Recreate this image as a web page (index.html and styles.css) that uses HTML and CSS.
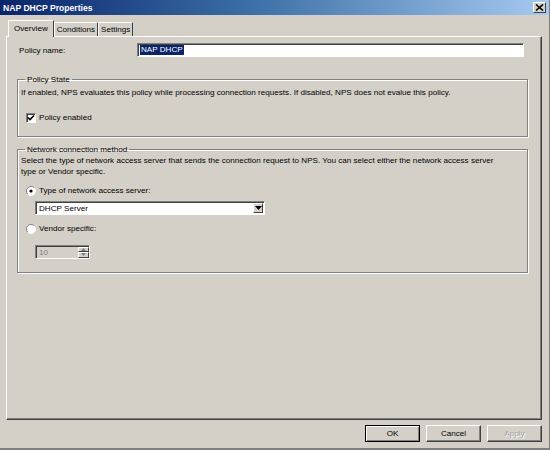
FILE: index.html
```html
<!DOCTYPE html>
<html>
<head>
<meta charset="utf-8">
<link rel="stylesheet" href="styles.css">
</head>
<body>
<div class="window">
  <div class="titlebar">
    <span class="title">NAP DHCP Properties</span>
    <span class="close"><svg width="9" height="7" viewBox="0 0 9 7"><path d="M1 0.5 L8 6.5 M8 0.5 L1 6.5" stroke="#000" stroke-width="1.6"/></svg></span>
  </div>
  <div class="content">
    <div class="tabs">
      <div class="tab active">Overview</div>
      <div class="tab">Conditions</div>
      <div class="tab">Settings</div>
    </div>
    <div class="panel">
      <div class="name-row">
        <span class="name-label">Policy name:</span>
        <div class="textbox"><span class="sel">NAP DHCP</span></div>
      </div>
      <fieldset class="group g1">
        <legend>Policy State</legend>
        <p class="desc">If enabled, NPS evaluates this policy while processing connection requests. If disabled, NPS does not evalue this policy.</p>
        <div class="opt-row check-row">
          <span class="checkbox"><svg width="8" height="8" viewBox="0 0 8 8"><path d="M1 3.5 L3 5.5 L7 1.5" stroke="#000" stroke-width="1.6" fill="none"/></svg></span>
          <span>Policy enabled</span>
        </div>
      </fieldset>
      <fieldset class="group g2">
        <legend>Network connection method</legend>
        <p class="desc">Select the type of network access server that sends the connection request to NPS. You can select either the network access server<br>type or Vendor specific.</p>
        <div class="opt-row radio-row1">
          <span class="radio"><svg width="10" height="10" viewBox="0 0 10 10"><circle cx="5" cy="5" r="4.5" fill="#fff"/><path d="M1.8 8.2 A4.5 4.5 0 0 1 8.2 1.8" stroke="#808080" fill="none"/><path d="M8.2 1.8 A4.5 4.5 0 0 1 1.8 8.2" stroke="#fff" fill="none"/><circle cx="5" cy="5" r="1.6" fill="#000"/></svg></span>
          <span>Type of network access server:</span>
        </div>
        <div class="combo">
          <span class="combo-text">DHCP Server</span>
          <span class="combo-btn"><svg width="7" height="4" viewBox="0 0 7 4"><path d="M0 0 H7 L3.5 4 Z" fill="#000"/></svg></span>
        </div>
        <div class="opt-row radio-row2">
          <span class="radio"><svg width="10" height="10" viewBox="0 0 10 10"><circle cx="5" cy="5" r="4.5" fill="#fff"/><path d="M1.8 8.2 A4.5 4.5 0 0 1 8.2 1.8" stroke="#808080" fill="none"/><path d="M8.2 1.8 A4.5 4.5 0 0 1 1.8 8.2" stroke="#fff" fill="none"/></svg></span>
          <span>Vendor specific:</span>
        </div>
        <div class="spin">
          <span class="spin-text">10</span>
          <span class="spin-btns">
            <span class="spin-btn"><svg width="5" height="3" viewBox="0 0 5 3"><path d="M0 3 H5 L2.5 0 Z" fill="#808080"/></svg></span>
            <span class="spin-btn"><svg width="5" height="3" viewBox="0 0 5 3"><path d="M0 0 H5 L2.5 3 Z" fill="#808080"/></svg></span>
          </span>
        </div>
      </fieldset>
    </div>
    <div class="buttons">
      <div class="btn default">OK</div>
      <div class="btn">Cancel</div>
      <div class="btn disabled">Apply</div>
    </div>
  </div>
</div>
</body>
</html>
```
FILE: styles.css
```css
html, body {
  margin: 0;
  padding: 0;
  background: #d4d0c8;
}
body {
  font-family: "Liberation Sans", Arial, sans-serif;
  font-size: 8.1px;
  color: #000;
}
.window {
  width: 550px;
  height: 450px;
  box-sizing: border-box;
  background: #d4d0c8;
  border-right: 1px solid #808080;
  border-bottom: 2px solid #808080;
  display: flex;
  flex-direction: column;
  overflow: hidden;
}
.titlebar {
  flex: none;
  height: 15px;
  background: linear-gradient(90deg, #0a246a 0%, #3a6ea5 45%, #a6caf0 100%);
  display: flex;
  align-items: center;
  justify-content: space-between;
  padding: 0 3px 0 3px;
}
.title {
  color: #fff;
  font-weight: bold;
  font-size: 8.6px;
}
.close {
  width: 11px;
  height: 9px;
  background: #d4d0c8;
  border: 1px solid;
  border-color: #fff #404040 #404040 #fff;
  display: flex;
  align-items: center;
  justify-content: center;
}
.content {
  flex: 1;
  display: flex;
  flex-direction: column;
  padding: 5px 7px 0 6px;
}
.tabs {
  display: flex;
  align-items: flex-end;
  height: 17px;
  margin-left: 2px;
  margin-bottom: -1px;
  position: relative;
  z-index: 1;
}
.tab {
  height: 13px;
  line-height: 13px;
  padding: 0 2px;
  margin-bottom: 1px;
  border: 1px solid;
  border-color: #fff #404040 transparent #fff;
  border-bottom: none;
  background: #d4d0c8;
  white-space: nowrap;
}
.tab.active {
  height: 16px;
  line-height: 15px;
  margin-bottom: 0;
  padding: 0 5px;
}
.panel {
  height: 384px;
  box-sizing: border-box;
  border: 1px solid;
  border-color: #fff #404040 #404040 #fff;
  box-shadow: inset -1px -1px 0 #808080;
  padding: 6px 13px 0 10px;
}
.name-row {
  display: flex;
  align-items: center;
  margin: 0 4px 0 2px;
}
.name-label {
  width: 118px;
  flex: none;
}
.textbox {
  flex: 1;
  height: 12px;
  background: #fff;
  border: 1px solid;
  border-color: #808080 #fff #fff #808080;
  box-shadow: inset 1px 1px 0 #404040;
  display: flex;
  align-items: center;
  padding-left: 2px;
}
.sel {
  background: #0a246a;
  color: #fff;
  line-height: 10px;
  padding: 0 1px;
}
.group {
  margin: 0;
  padding: 0 0 0 3px;
  border: 1px solid #808080;
  box-shadow: inset 1px 1px 0 #fff, 1px 1px 0 #fff;
  min-width: 0;
}
.group legend {
  padding: 0 2px;
  margin-left: 4px;
  line-height: 11px;
}
.g1 {
  margin-top: 17px;
  padding-bottom: 13px;
}
.g2 {
  margin-top: 7px;
  padding-bottom: 13px;
}
.desc {
  margin: 2px 0 0 0;
  line-height: 11px;
}
.g2 .desc {
  margin-top: 0;
}
.opt-row {
  display: flex;
  align-items: center;
  gap: 3px;
  margin-left: 5px;
  line-height: 11px;
}
.check-row {
  margin-top: 14px;
}
.checkbox {
  width: 8px;
  height: 8px;
  background: #fff;
  border: 1px solid;
  border-color: #808080 #fff #fff #808080;
  box-shadow: inset 1px 1px 0 #404040;
  display: flex;
  align-items: center;
  justify-content: center;
}
.radio {
  width: 10px;
  height: 10px;
  display: flex;
}
.radio-row1 {
  margin-top: 8px;
}
.combo {
  margin: 5px 0 0 14px;
  width: 228px;
  height: 12px;
  background: #fff;
  border: 1px solid;
  border-color: #808080 #fff #fff #808080;
  box-shadow: inset 1px 1px 0 #404040;
  display: flex;
  align-items: center;
  justify-content: space-between;
}
.combo-text {
  padding-left: 3px;
}
.combo-btn {
  width: 10px;
  height: 10px;
  margin-right: 1px;
  box-sizing: border-box;
  background: #d4d0c8;
  border: 1px solid;
  border-color: #fff #404040 #404040 #fff;
  display: flex;
  align-items: center;
  justify-content: center;
}
.radio-row2 {
  margin-top: 8px;
}
.spin {
  margin: 11px 0 0 14px;
  width: 53px;
  height: 12px;
  background: #d4d0c8;
  border: 1px solid;
  border-color: #808080 #fff #fff #808080;
  box-shadow: inset 1px 1px 0 #404040;
  display: flex;
  align-items: center;
  justify-content: space-between;
}
.spin-text {
  color: #808080;
  padding-left: 3px;
}
.spin-btns {
  display: flex;
  flex-direction: column;
  width: 11px;
  height: 11px;
}
.spin-btn {
  flex: 1;
  box-sizing: border-box;
  border: 1px solid;
  border-color: #fff #404040 #404040 #fff;
  display: flex;
  align-items: center;
  justify-content: center;
}
.buttons {
  display: flex;
  justify-content: flex-end;
  gap: 6px;
  margin-top: 5px;
}
.btn {
  width: 55px;
  height: 17px;
  box-sizing: border-box;
  border: 1px solid;
  border-color: #fff #404040 #404040 #fff;
  box-shadow: inset -1px -1px 0 #808080;
  display: flex;
  align-items: center;
  justify-content: center;
}
.btn.default {
  border-color: #000;
  box-shadow: inset 1px 1px 0 #fff, inset -1px -1px 0 #808080;
}
.btn.disabled {
  color: #a0a0a0;
  text-shadow: 1px 1px 0 #fff;
}
```
